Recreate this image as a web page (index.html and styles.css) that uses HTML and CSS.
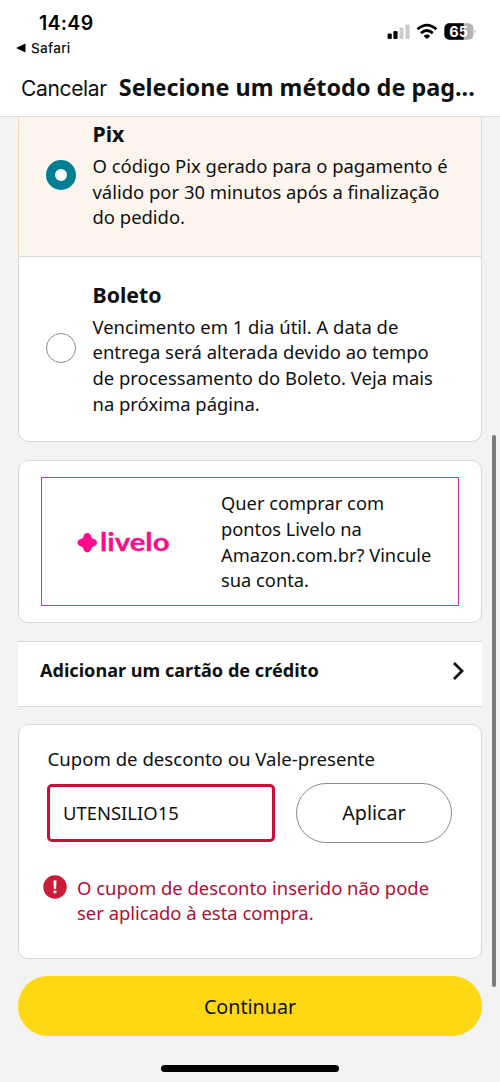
FILE: index.html
```html
<!DOCTYPE html>
<html lang="pt-BR">

<head>
  <meta charset="utf-8">
  <title>Selecione um método de pagamento</title>
  <link rel="stylesheet" href="styles.css">
</head>

<body>
<div class="screen">

  <div class="statusbar">
    <div class="clock">
      <div class="time">14:49</div>
      <div class="back">
        <svg width="10" height="10" viewBox="0 0 10 10"><path d="M0 5 L9.5 0.6 V9.4 Z"/></svg>
        <span>Safari</span>
      </div>
    </div>
    <svg class="indicators" width="90" height="18" viewBox="0 0 90 18">
      <rect x="0.6" y="10.6" width="4.2" height="5.4" rx="1.2"/>
      <rect x="6.4" y="8" width="4.2" height="8" rx="1.2"/>
      <rect x="12.4" y="4.6" width="4.2" height="11.4" rx="1.2" fill="#ccc"/>
      <rect x="18.4" y="1.4" width="4.2" height="14.6" rx="1.2" fill="#ccc"/>
      <g fill="none" stroke="#000" stroke-width="2.8">
        <path d="M30.5 6.3 Q39.9 -2 49.3 6.3"/>
        <path d="M34 10.1 Q39.9 5 45.8 10.1"/>
      </g>
      <path d="M36.6 12.9 Q39.9 10.2 43.2 12.9 L39.9 16.1 Z"/>
      <rect x="57.4" y="0.3" width="29" height="16.5" rx="5" fill="#b3b3b3"/>
      <path d="M62.4 0.3 H76.7 V16.8 H62.4 A5 5 0 0 1 57.4 11.8 V5.3 A5 5 0 0 1 62.4 0.3 Z"/>
      <path d="M87.6 5.8 Q89.8 8.5 87.6 11.2 Z" fill="#b3b3b3"/>
      <text class="level" x="71.6" y="13.6" text-anchor="middle">65</text>
    </svg>
  </div>

  <div class="header">
    <span class="cancel">Cancelar</span>
    <h1>Selecione um método de pag...</h1>
  </div>

  <div class="content">
    <div class="card methods">
      <div class="option selected">
        <span class="radio checked"></span>
        <div class="text">
          <h2>Pix</h2>
          <p>O código Pix gerado para o pagamento é<br>válido por 30 minutos após a finalização<br>do pedido.</p>
        </div>
      </div>
      <div class="option">
        <span class="radio"></span>
        <div class="text">
          <h2>Boleto</h2>
          <p>Vencimento em 1 dia útil. A data de<br>entrega será alterada devido ao tempo<br>de processamento do Boleto. Veja mais<br>na próxima página.</p>
        </div>
      </div>
    </div>

    <div class="card points">
      <div class="livelo">
        <svg class="logo" width="94" height="32" viewBox="0 -5 94 32">
          <path d="M10.3 2 C12.6 2 13.6 3.6 14.2 5.4 C14.8 7.2 15.2 7.5 16.9 8.1 C18.6 8.7 20 9.7 20 11.7 C20 13.7 18.6 14.7 16.9 15.3 C15.2 15.9 14.8 16.2 14.2 18 C13.6 19.8 12.6 21.4 10.3 21.4 C8 21.4 7 19.8 6.4 18 C5.8 16.2 5.4 15.9 3.7 15.3 C2 14.7 0.6 13.7 0.6 11.7 C0.6 9.7 2 8.7 3.7 8.1 C5.4 7.5 5.8 7.2 6.4 5.4 C7 3.6 8 2 10.3 2 Z"/>
          <text x="23" y="20.2" textLength="69.5" lengthAdjust="spacingAndGlyphs">livelo</text>
        </svg>
        <p>Quer comprar com<br>pontos Livelo na<br>Amazon.com.br? Vincule<br>sua conta.</p>
      </div>
    </div>

    <div class="addcard">
      <span>Adicionar um cartão de crédito</span>
      <svg width="13" height="20" viewBox="0 0 13 20"><path d="M2 2 L10 10 L2 18"/></svg>
    </div>

    <div class="card coupon">
      <label for="code">Cupom de desconto ou Vale-presente</label>
      <div class="row">
        <input id="code" type="text" value="UTENSILIO15">
        <button class="apply">Aplicar</button>
      </div>
      <div class="error">
        <svg width="24" height="24" viewBox="0 0 24 24">
          <circle cx="12" cy="12" r="11.7"/>
          <path d="M10.5 5.5 H13.5 L13.1 14 H10.9 Z M10.6 15.4 H13.4 V18.2 H10.6 Z"/>
        </svg>
        <p>O cupom de desconto inserido não pode<br>ser aplicado à esta compra.</p>
      </div>
    </div>

    <button class="continue">Continuar</button>
  </div>

  <div class="scrollbar"></div>
  <div class="home"></div>
</div>
</body>

</html>
```

FILE: styles.css
```css
* { box-sizing: border-box }
body { background: #f3f3f3; color: #0f1111; font-family: "Noto Sans", sans-serif; font-size: 18.45px; line-height: 25.6px; margin: 0; padding: 0 }
h1, h2, p { margin: 0; white-space: nowrap }
svg { display: block; flex: none }
.screen { height: 1082px; overflow: hidden; position: relative }

/* Status bar */

.statusbar { background: white; display: flex; font-family: Inter, sans-serif; height: 60px; justify-content: space-between; padding: 12px 23px 0 16px }
.time { color: #000; font-size: 19.5px; font-weight: 600; letter-spacing: 0.3px; line-height: 22px; padding-left: 23px }
.back { align-items: center; display: flex; font-size: 13.6px; font-weight: 500; gap: 5px; letter-spacing: 0.25px; line-height: 18px; margin-top: 5px }
.indicators { margin-top: 11px }
.level { fill: white; font-size: 14.5px; font-weight: 700 }

/* Title */

.header { align-items: center; background: white; border-bottom: 1px solid #ddd; display: flex; gap: 12px; height: 57px; padding: 0 0 0 21px }
.cancel { font-family: Inter, sans-serif; font-size: 21px; letter-spacing: -0.35px; padding-top: 1px }
h1 { font-size: 23.4px; font-weight: 700 }

.content { padding: 0 18px }
.card { background: white; border: 1px solid #d5d9d9; border-radius: 10px; margin-bottom: 18px }

/* Payment options */

.methods { border-radius: 0 0 10px 10px; border-top: 0 }
.option { align-items: center; display: flex; gap: 16.5px; height: 184px; padding: 0 0 1px 27px }
.option .text { padding-top: 1px }
.option.selected { background: #fcf5ee; border: 1px solid #fbd8b4; border-bottom-color: #d5d9d9; border-top: 0; height: 140px; margin: 0 -1px; padding-bottom: 23px }
.radio { background: white; border: 1.5px solid #888c8c; border-radius: 50%; flex: none; height: 30px; margin-top: -1px; width: 30px }
.radio.checked { border: 9px solid #007f94 }
h2 { font-size: 21.3px; font-weight: 700; line-height: 26px; margin-bottom: 6px }

/* Livelo */

.points { height: 163px; padding: 16px 22px }
.livelo { align-items: center; border: 1.5px solid #d9349a; display: flex; gap: 50px; height: 129px; padding-left: 35px }
.livelo p { font-size: 18.3px }
.logo { fill: #ff0a8c }
.logo text { font-family: Lato, sans-serif; font-size: 25px; font-weight: 700; stroke: #ff0a8c; stroke-width: 0.3 }

.addcard { align-items: center; background: white; border: 1px solid #d5d9d9; border-width: 1px 0; display: flex; font-size: 18.1px; font-weight: 700; height: 66px; justify-content: space-between; margin-bottom: 17px; padding: 0 17px 6px 22px }
.addcard svg { fill: none; stroke: #0f1111; stroke-width: 2.8 }

/* Coupon */

.coupon { height: 235px; margin-bottom: 17px; padding: 21px 29px 0 }
.coupon label { display: block; font-size: 18.6px; margin-left: -0.5px }
.row { align-items: center; display: flex; gap: 21px; margin-top: 11px }
.row input { background: white; border: 3px solid #cc0c39; border-radius: 5px; color: #0f1111; font: inherit; height: 58px; margin-left: -1px; padding: 0 13px; width: 228px }
button { color: #0f1111; font-family: inherit; font-size: 19.7px; padding: 0 }
.apply { background: white; border: 1px solid #888c8c; border-radius: 30px; height: 60px; width: 157px }
.error { color: #b70b33; display: flex; gap: 10px; margin: 32px 0 0 -5px }
.error svg { fill: #cc1b39 }
.error path { fill: white }
.continue { background: #ffd814; border: 0; border-radius: 30px; display: block; height: 60px; width: 100% }

/* Overlays */

.scrollbar { background: #7b7b7b; border-radius: 2px; height: 552px; position: absolute; right: 4px; top: 435px; width: 4px }
.home { background: #000; border-radius: 4px; bottom: 10px; height: 7px; left: 161px; position: absolute; width: 178px }
```
